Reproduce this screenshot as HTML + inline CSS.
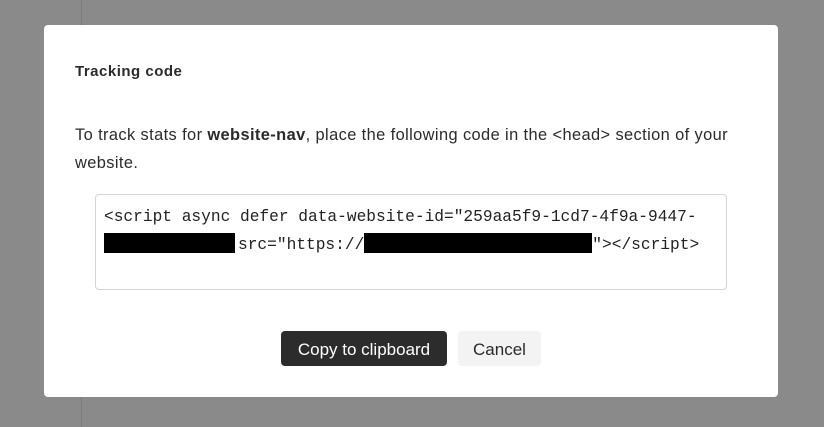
<!DOCTYPE html>
<html><head><style>
body{margin:0;width:824px;height:427px;background:#8a8a8a;position:relative;overflow:hidden;font-family:"Liberation Sans",sans-serif;color:#2b2b2b}
.vl{position:absolute;left:81px;top:0;width:1px;height:427px;background:#7a7a7a}
.m{position:absolute;left:44px;top:25px;width:734px;height:372px;background:#fff;border-radius:4px}
.t{position:absolute;left:31px;top:38px;font-size:15px;font-weight:bold;letter-spacing:0.5px}
.p{position:absolute;left:31px;top:96px;width:662px;font-size:16.4px;letter-spacing:0.4px;line-height:28px}
.c{position:absolute;left:51px;top:169px;width:632px;height:96px;border:1px solid #d5d5d5;border-radius:4px;font-family:"Liberation Mono",monospace;font-size:16.2px;line-height:28px;padding:8px 0 0 8px;box-sizing:border-box;color:#222;white-space:nowrap;letter-spacing:0}
.r{display:inline-block;background:#000;height:20px;vertical-align:-4px}
.b1{position:absolute;left:237px;top:306px;width:166px;height:35px;background:#2c2c2c;color:#fff;border-radius:4px;font-size:17px;line-height:37px;text-align:center}
.b2{position:absolute;left:414px;top:306px;width:83px;height:35px;background:#f3f3f3;border-radius:4px;font-size:17px;line-height:37px;text-align:center}
</style></head><body>
<div class="vl"></div>
<div class="m">
<div class="t">Tracking code</div>
<div class="p">To track stats for <b>website-nav</b>, place the following code in the &lt;head&gt; section of your website.</div>
<div class="c">&lt;script async defer data-website-id="259aa5f9-1cd7-4f9a-9447-<br><span class="r" style="width:131px;margin-right:3px"></span>src="https://<span class="r" style="width:228px"></span>"&gt;&lt;/script&gt;</div>
<div class="b1">Copy to clipboard</div>
<div class="b2">Cancel</div>
</div>
</body></html>
